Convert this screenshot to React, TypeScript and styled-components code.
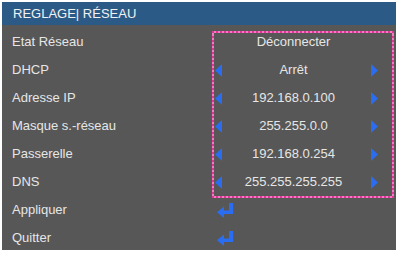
import React from "react";
import styled, { createGlobalStyle } from "styled-components";

const Global = createGlobalStyle`
  html, body { margin: 0; padding: 0; background: #ffffff; }
  body { font-family: "Liberation Sans", Arial, sans-serif; }
`;

const Panel = styled.div`
  margin: 2px 0 0 2px;
  width: 394px;
  height: 248px;
  background: #575757;
  overflow: hidden;
  display: flex;
  flex-direction: column;
`;

const Header = styled.div`
  height: 23px;
  background: #2c5a87;
  color: #f2f2f2;
  font-size: 13px;
  line-height: 23px;
  padding-left: 11px;
  flex: none;
`;

const Body = styled.div`
  padding-top: 3px;
  display: flex;
  flex-direction: column;
`;

const Section = styled.div`
  display: grid;
  grid-template-columns: 212px 178px;
`;

const LabelCol = styled.div`
  display: flex;
  flex-direction: column;
`;

const Label = styled.div`
  height: 28px;
  line-height: 28px;
  padding-left: 10px;
  font-size: 13px;
  color: #e6e6e6;
  white-space: nowrap;
`;

const ValueCol = styled.div`
  margin-top: 5px;
  outline: 2px dotted #e2359a;
  box-shadow: 0 0 0 2px #f17dc0;
  display: flex;
  flex-direction: column;
`;

const ValueRow = styled.div<{ $first?: boolean }>`
  height: 28px;
  flex: none;
  margin-top: ${(p) => (p.$first ? -5 : 0)}px;
  display: grid;
  grid-template-columns: 9px 1fr 9px;
  padding-right: 13px;
  align-items: center;
`;

const Value = styled.div`
  text-align: center;
  font-size: 13px;
  color: #e6e6e6;
  padding-right: 6px;
  white-space: nowrap;
  line-height: 28px;
`;

const ActionRow = styled.div`
  display: grid;
  grid-template-columns: 212px 1fr;
  align-items: center;
`;

const IconCell = styled.div`
  display: flex;
  align-items: center;
  padding-left: 2px;
  height: 28px;
`;

const Arrow = ({ dir }: { dir: "left" | "right" }) => (
  <svg width="9" height="13" viewBox="0 0 9 13" style={{ display: "block" }}>
    {dir === "left" ? (
      <polygon points="8,0 8,13 1,6.5" fill="#2a6df0" />
    ) : (
      <polygon points="1,0 1,13 8,6.5" fill="#2a6df0" />
    )}
  </svg>
);

const EnterIcon = () => (
  <svg width="18" height="15" viewBox="0 0 18 15">
    <path d="M13 0 H17 V11 H8 V7.5 H13 Z" fill="#2a6df0" />
    <polygon points="1,9.25 8,3.5 8,15" fill="#2a6df0" />
  </svg>
);

const labels = ["Etat Réseau", "DHCP", "Adresse IP", "Masque s.-réseau", "Passerelle", "DNS"];
const values = ["Déconnecter", "Arrêt", "192.168.0.100", "255.255.0.0", "192.168.0.254", "255.255.255.255"];

export default function App() {
  return (
    <>
      <Global />
      <Panel>
        <Header>REGLAGE| RÉSEAU</Header>
        <Body>
          <Section>
            <LabelCol>
              {labels.map((l) => (
                <Label key={l}>{l}</Label>
              ))}
            </LabelCol>
            <ValueCol>
              {values.map((v, i) => (
                <ValueRow key={v} $first={i === 0}>
                  <span>{i > 0 && <Arrow dir="left" />}</span>
                  <Value>{v}</Value>
                  <span>{i > 0 && <Arrow dir="right" />}</span>
                </ValueRow>
              ))}
            </ValueCol>
          </Section>
          {["Appliquer", "Quitter"].map((a) => (
            <ActionRow key={a}>
              <Label>{a}</Label>
              <IconCell>
                <EnterIcon />
              </IconCell>
            </ActionRow>
          ))}
        </Body>
      </Panel>
    </>
  );
}
